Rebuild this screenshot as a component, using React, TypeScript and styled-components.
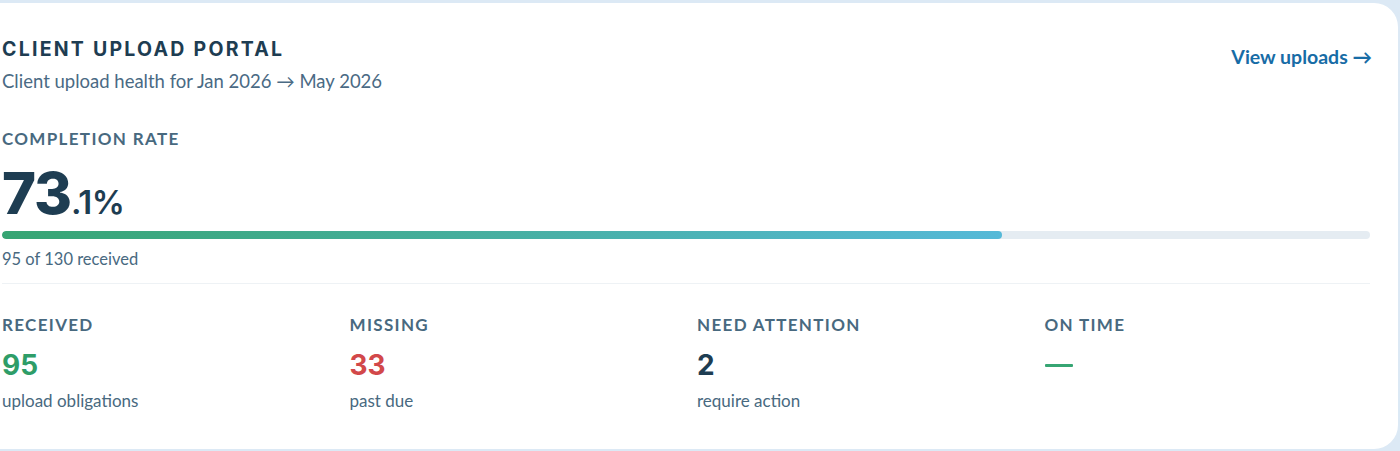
import React from 'react'
import styled, { createGlobalStyle } from 'styled-components'

const GlobalStyle = createGlobalStyle`
  html, body {
    margin: 0;
    padding: 0;
    background: #dce9f5;
    overflow: hidden;
  }
  body {
    font-family: 'Lato', 'Liberation Sans', sans-serif;
    -webkit-font-smoothing: antialiased;
  }
`

const headingFont = `'Inter', 'DejaVu Sans', sans-serif`

const Page = styled.div`
  padding-top: 3px;
  height: 451px;
  box-sizing: border-box;
`

const Card = styled.section`
  margin-left: -26px;
  width: 1424px;
  height: 446px;
  box-sizing: border-box;
  background: #ffffff;
  border-radius: 24px;
  padding: 34px 28px 0 28px;
  display: flex;
  flex-direction: column;
`

const Header = styled.header`
  display: flex;
  justify-content: space-between;
  align-items: flex-start;
`

const TitleBlock = styled.div`
  display: flex;
  flex-direction: column;
  gap: 8px;
`

const Title = styled.h2`
  margin: 0;
  font-family: ${headingFont};
  font-size: 19.5px;
  line-height: 24px;
  font-weight: 700;
  letter-spacing: 0.115em;
  color: #1e3d52;
`

const Subtitle = styled.p`
  margin: 0;
  font-size: 18.5px;
  line-height: 24px;
  color: #4a6a84;
`

const ViewLink = styled.a`
  margin-top: 8px;
  margin-right: -2px;
  font-size: 19.5px;
  line-height: 24px;
  font-weight: 700;
  color: #176ca6;
  text-decoration: none;
  cursor: pointer;
`

const Section = styled.div`
  margin-top: 36px;
  display: flex;
  flex-direction: column;
`

const Label = styled.div`
  font-size: 17px;
  line-height: 20px;
  font-weight: 700;
  letter-spacing: 0.078em;
  text-transform: uppercase;
  color: #48697f;
`

const BigValue = styled.div`
  margin-top: 16px;
  font-family: ${headingFont};
  color: #1e3d52;
  font-weight: 800;
  line-height: 56px;
  display: flex;
  align-items: baseline;
`

const BigWhole = styled.span`
  font-size: 58px;
  letter-spacing: -0.02em;
`

const BigFraction = styled.span`
  font-size: 33px;
  font-weight: 600;
  letter-spacing: -0.01em;
`

const Track = styled.div`
  margin-top: 1px;
  height: 8px;
  border-radius: 4px;
  background: #e5ecf2;
  overflow: hidden;
`

const Fill = styled.div`
  height: 100%;
  border-radius: 4px;
  background: linear-gradient(90deg, #36a573 0%, #45ae9c 45%, #55b9d8 100%);
`

const Caption = styled.div`
  margin-top: 10px;
  font-size: 16.5px;
  line-height: 20px;
  color: #48697f;
`

const Divider = styled.hr`
  margin: 14px 0 0 0;
  border: none;
  border-top: 1px solid #eef2f5;
`

const Stats = styled.div`
  margin-top: 31px;
  display: grid;
  grid-template-columns: repeat(4, 1fr);
  column-gap: 22px;
`

const Stat = styled.div`
  display: flex;
  flex-direction: column;
`

const StatValue = styled.div<{ $color: string }>`
  margin-top: 14px;
  height: 32px;
  font-family: ${headingFont};
  font-size: 28px;
  line-height: 32px;
  font-weight: 700;
  color: ${({ $color }) => $color};
`

const Dash = styled.div`
  margin-top: 29px;
  width: 28px;
  height: 3px;
  border-radius: 1px;
  background: #36a573;
`

const StatNote = styled.div`
  margin-top: 10px;
  font-size: 17px;
  line-height: 20px;
  color: #48697f;
`

const received = 95
const total = 130
const rate = (received / total) * 100

const stats = [
  { label: 'Received', value: '95', color: '#2e9d68', note: 'upload obligations' },
  { label: 'Missing', value: '33', color: '#d2484a', note: 'past due' },
  { label: 'Need attention', value: '2', color: '#1e3d52', note: 'require action' },
  { label: 'On time', value: null, color: '#36a573', note: '' },
]

export default function App() {
  const [whole, frac] = rate.toFixed(1).split('.')
  return (
    <>
      <GlobalStyle />
      <Page>
        <Card>
          <Header>
            <TitleBlock>
              <Title>CLIENT UPLOAD PORTAL</Title>
              <Subtitle>Client upload health for Jan 2026 → May 2026</Subtitle>
            </TitleBlock>
            <ViewLink>View uploads →</ViewLink>
          </Header>

          <Section>
            <Label>Completion rate</Label>
            <BigValue>
              <BigWhole>{whole}</BigWhole>
              <BigFraction>.{frac}%</BigFraction>
            </BigValue>
            <Track>
              <Fill style={{ width: `${rate}%` }} />
            </Track>
            <Caption>
              {received} of {total} received
            </Caption>
            <Divider />
          </Section>

          <Stats>
            {stats.map((s) => (
              <Stat key={s.label}>
                <Label>{s.label}</Label>
                {s.value ? (
                  <StatValue $color={s.color}>{s.value}</StatValue>
                ) : (
                  <Dash />
                )}
                {s.note && <StatNote>{s.note}</StatNote>}
              </Stat>
            ))}
          </Stats>
        </Card>
      </Page>
    </>
  )
}
